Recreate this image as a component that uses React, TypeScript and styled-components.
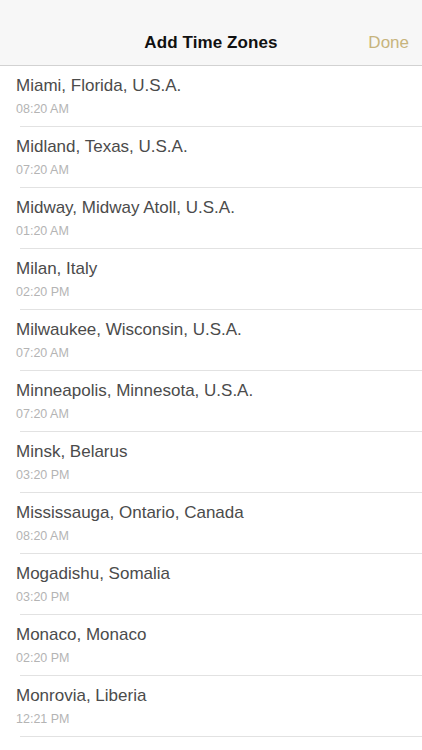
import React from 'react';
import styled, { createGlobalStyle } from 'styled-components';

const GlobalStyle = createGlobalStyle`
    html, body {
        margin: 0;
        padding: 0;
        background: #ffffff;
        font-family: "Liberation Sans", Arial, sans-serif;
    }
`;

const Screen = styled.div`
    width: 422px;
    height: 750px;
    overflow: hidden;
    display: flex;
    flex-direction: column;
    background: #ffffff;
`;

const Header = styled.header`
    flex-shrink: 0;
    height: 45px;
    padding-top: 20px;
    display: grid;
    grid-template-columns: 1fr auto 1fr;
    align-items: center;
    background: #f7f7f7;
    border-bottom: 1px solid #d2d2d2;
`;

const Title = styled.h1`
    grid-column: 2;
    margin: 0;
    font-size: 17px;
    font-weight: 700;
    color: #111111;
    letter-spacing: 0.1px;
`;

const DoneButton = styled.button`
    grid-column: 3;
    justify-self: end;
    margin-right: 13px;
    padding: 0;
    border: none;
    background: none;
    font-family: inherit;
    font-size: 17px;
    color: #c7b47d;
    cursor: pointer;
`;

const List = styled.ul`
    list-style: none;
    margin: 0;
    padding: 0;
`;

const Row = styled.li`
    height: 60px;
    box-sizing: border-box;
    padding: 10px 0 0 16px;
    display: flex;
    flex-direction: column;
    gap: 5px;
`;

const City = styled.span`
    font-size: 17px;
    line-height: 20px;
    color: #4b4b4b;
`;

const Time = styled.span`
    font-size: 12.5px;
    line-height: 16px;
    color: #b4b4b4;
`;

const Separator = styled.li`
    height: 1px;
    margin-left: 20px;
    background: #e2e2e2;
`;

const zones = [
    { city: 'Miami, Florida, U.S.A.', time: '08:20 AM' },
    { city: 'Midland, Texas, U.S.A.', time: '07:20 AM' },
    { city: 'Midway, Midway Atoll, U.S.A.', time: '01:20 AM' },
    { city: 'Milan, Italy', time: '02:20 PM' },
    { city: 'Milwaukee, Wisconsin, U.S.A.', time: '07:20 AM' },
    { city: 'Minneapolis, Minnesota, U.S.A.', time: '07:20 AM' },
    { city: 'Minsk, Belarus', time: '03:20 PM' },
    { city: 'Mississauga, Ontario, Canada', time: '08:20 AM' },
    { city: 'Mogadishu, Somalia', time: '03:20 PM' },
    { city: 'Monaco, Monaco', time: '02:20 PM' },
    { city: 'Monrovia, Liberia', time: '12:21 PM' },
];

const App: React.FC = () => (
    <>
        <GlobalStyle />
        <Screen>
            <Header>
                <Title>Add Time Zones</Title>
                <DoneButton>Done</DoneButton>
            </Header>
            <List>
                {zones.map((z) => (
                    <React.Fragment key={z.city}>
                        <Row>
                            <City>{z.city}</City>
                            <Time>{z.time}</Time>
                        </Row>
                        <Separator />
                    </React.Fragment>
                ))}
            </List>
        </Screen>
    </>
);

export default App;
